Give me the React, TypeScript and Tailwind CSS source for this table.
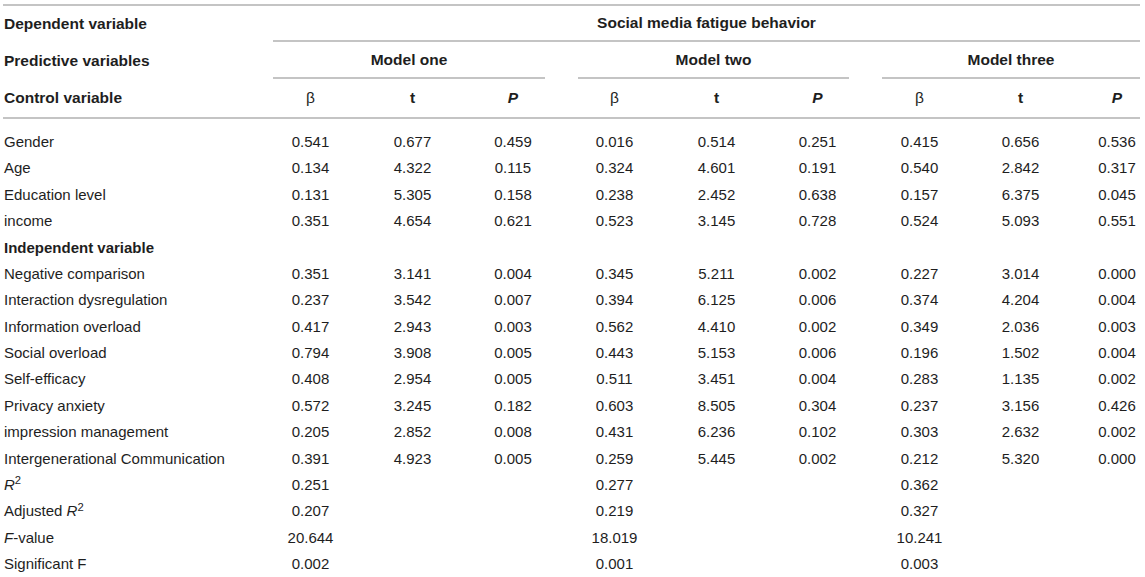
const cols = 'grid grid-cols-[256px_103px_101px_100px_103px_101px_101px_103px_99px_70px]';

type Row = { label: React.ReactNode; values: string[]; bold?: boolean };

const rows: Row[] = [
  { label: 'Gender', values: ['0.541', '0.677', '0.459', '0.016', '0.514', '0.251', '0.415', '0.656', '0.536'] },
  { label: 'Age', values: ['0.134', '4.322', '0.115', '0.324', '4.601', '0.191', '0.540', '2.842', '0.317'] },
  { label: 'Education level', values: ['0.131', '5.305', '0.158', '0.238', '2.452', '0.638', '0.157', '6.375', '0.045'] },
  { label: 'income', values: ['0.351', '4.654', '0.621', '0.523', '3.145', '0.728', '0.524', '5.093', '0.551'] },
  { label: 'Independent variable', values: [], bold: true },
  { label: 'Negative comparison', values: ['0.351', '3.141', '0.004', '0.345', '5.211', '0.002', '0.227', '3.014', '0.000'] },
  { label: 'Interaction dysregulation', values: ['0.237', '3.542', '0.007', '0.394', '6.125', '0.006', '0.374', '4.204', '0.004'] },
  { label: 'Information overload', values: ['0.417', '2.943', '0.003', '0.562', '4.410', '0.002', '0.349', '2.036', '0.003'] },
  { label: 'Social overload', values: ['0.794', '3.908', '0.005', '0.443', '5.153', '0.006', '0.196', '1.502', '0.004'] },
  { label: 'Self-efficacy', values: ['0.408', '2.954', '0.005', '0.511', '3.451', '0.004', '0.283', '1.135', '0.002'] },
  { label: 'Privacy anxiety', values: ['0.572', '3.245', '0.182', '0.603', '8.505', '0.304', '0.237', '3.156', '0.426'] },
  { label: 'impression management', values: ['0.205', '2.852', '0.008', '0.431', '6.236', '0.102', '0.303', '2.632', '0.002'] },
  { label: 'Intergenerational Communication', values: ['0.391', '4.923', '0.005', '0.259', '5.445', '0.002', '0.212', '5.320', '0.000'] },
  {
    label: (
      <>
        <i>R</i>
        <sup>2</sup>
      </>
    ),
    values: ['0.251', '', '', '0.277', '', '', '0.362', '', ''],
  },
  {
    label: (
      <>
        Adjusted <i>R</i>
        <sup>2</sup>
      </>
    ),
    values: ['0.207', '', '', '0.219', '', '', '0.327', '', ''],
  },
  {
    label: (
      <>
        <i>F</i>-value
      </>
    ),
    values: ['20.644', '', '', '18.019', '', '', '10.241', '', ''],
  },
  { label: 'Significant F', values: ['0.002', '', '', '0.001', '', '', '0.003', '', ''] },
];

const models = [
  { name: 'Model one', span: 'col-span-3 ml-[14px] mr-[18px]' },
  { name: 'Model two', span: 'col-span-3 ml-[15px] mr-[19px]' },
  { name: 'Model three', span: 'col-span-3 ml-[14px]' },
];

function ColHeads() {
  return (
    <>
      <div className="text-center font-normal">β</div>
      <div className="text-center">t</div>
      <div className="text-center italic">P</div>
    </>
  );
}

export default function App() {
  return (
    <div className="w-[1145px] h-[577px] overflow-hidden bg-white font-['Liberation_Sans',Arial,sans-serif] text-[#1e1e1e]">
      <div className="ml-[3px] mt-[4px] w-[1137px]">
        <div className="border-t-2 border-b-2 border-[#c4c4c4] text-[15.5px] font-bold">
          <div className={`${cols} h-[36px] items-center`}>
            <div className="pl-px">Dependent variable</div>
            <div className="col-span-9 ml-[14px] h-full flex items-center justify-center border-b-2 border-[#c4c4c4]">
              Social media fatigue behavior
            </div>
          </div>
          <div className={`${cols} h-[37px] items-center`}>
            <div className="pl-px">Predictive variables</div>
            {models.map((m) => (
              <div key={m.name} className={`${m.span} h-full flex items-center justify-center border-b-2 border-[#c4c4c4]`}>
                {m.name}
              </div>
            ))}
          </div>
          <div className={`${cols} h-[38px] items-center`}>
            <div className="pl-px">Control variable</div>
            <ColHeads />
            <ColHeads />
            <div className="text-center font-normal">β</div>
            <div className="text-center">t</div>
            <div className="text-center italic pl-[24px]">P</div>
          </div>
        </div>

        <div className={`${cols} auto-rows-[26.4px] items-center pt-[10px] text-[15px]`}>
          {rows.map((r, i) => (
            <div key={i} className="contents">
              <div className={`pl-px whitespace-nowrap ${r.bold ? 'font-bold' : ''}`}>{r.label}</div>
              {Array.from({ length: 9 }).map((_, j) => (
                <div key={j} className={`text-center ${j === 8 ? 'pl-[24px]' : ''}`}>
                  {r.values[j] ?? ''}
                </div>
              ))}
            </div>
          ))}
        </div>
      </div>
    </div>
  );
}
